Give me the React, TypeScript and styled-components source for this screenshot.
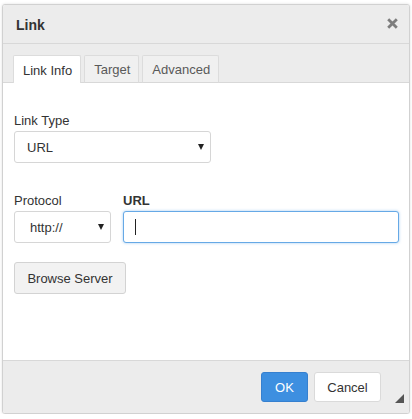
import React from "react";
import styled, { createGlobalStyle } from "styled-components";

const Global = createGlobalStyle`
  html, body { margin: 0; padding: 0; background: #ffffff; }
  body { font-family: "Liberation Sans", Arial, sans-serif; font-size: 13px; color: #333; }
  * { box-sizing: border-box; }
`;

const Dialog = styled.div`
  margin: 4px 0 0 2px;
  width: 408px;
  border: 1px solid #d1d1d1;
  border-radius: 3px;
  box-shadow: 0 0 3px rgba(0, 0, 0, 0.12);
  overflow: hidden;
  display: flex;
  flex-direction: column;
  background: #fff;
`;

const TitleBar = styled.div`
  height: 39px;
  background: #ececec;
  border-bottom: 1px solid #d8d8d8;
  display: flex;
  align-items: center;
  justify-content: space-between;
  padding: 0 11px 0 13px;
`;

const Title = styled.div`
  font-weight: bold;
  font-size: 14px;
  color: #333;
  line-height: 16px;
  padding-top: 1px;
`;

const Close = styled.div`
  width: 11px;
  height: 11px;
  display: flex;
  margin-top: -1px;
`;

const TabStrip = styled.div`
  height: 39px;
  background: #ececec;
  border-bottom: 1px solid #d8d8d8;
  padding: 11px 0 0 10px;
  display: flex;
  align-items: flex-start;
`;

const Tab = styled.div<{ $active?: boolean }>`
  height: 28px;
  margin-bottom: -1px;
  margin-right: 3px;
  padding: 0 8px 0 9px;
  border: 1px solid #dcdcdc;
  border-bottom: ${(p) => (p.$active ? "none" : "1px solid #d8d8d8")};
  background: ${(p) => (p.$active ? "#ffffff" : "#f0f0f0")};
  color: ${(p) => (p.$active ? "#333" : "#595959")};
  display: flex;
  align-items: center;
  font-size: 13px;
  border-radius: 2px 2px 0 0;
  padding-top: ${(p) => (p.$active ? "1px" : "0")};
`;

const Content = styled.div`
  height: 277px;
  background: #fff;
  padding: 30px 11px 0 11px;
  display: flex;
  flex-direction: column;
`;

const Label = styled.div<{ $bold?: boolean }>`
  font-size: 13px;
  line-height: 16px;
  height: 16px;
  margin-bottom: 2px;
  color: #333;
  font-weight: ${(p) => (p.$bold ? "bold" : "normal")};
`;

const SelectBox = styled.div<{ $width: number; $pad: number }>`
  width: ${(p) => p.$width}px;
  height: 32px;
  border: 1px solid #d6d6d6;
  border-radius: 3px;
  background: #fff;
  display: flex;
  align-items: center;
  justify-content: space-between;
  padding: 0 6px 0 ${(p) => p.$pad}px;
  font-size: 13px;
  color: #333;
`;

const Arrow = () => (
  <svg width="6" height="6" viewBox="0 0 6 6">
    <path d="M0 0 L6 0 L3 6 Z" fill="#222" />
  </svg>
);

const Row = styled.div`
  display: flex;
  gap: 12px;
  margin-top: 30px;
`;

const Field = styled.div<{ $grow?: boolean }>`
  display: flex;
  flex-direction: column;
  flex: ${(p) => (p.$grow ? 1 : "none")};
`;

const TextInput = styled.div`
  width: 276px;
  height: 32px;
  border: 1px solid #66a9e6;
  border-radius: 3px;
  box-shadow: 0 0 3px rgba(102, 169, 230, 0.6);
  background: #fff;
  display: flex;
  align-items: center;
  padding-left: 11px;
`;

const Caret = styled.span`
  width: 1px;
  height: 16px;
  background: #222;
`;

const Button = styled.div`
  margin-top: 19px;
  width: 112px;
  height: 32px;
  border: 1px solid #d3d3d3;
  border-radius: 3px;
  background: #f2f2f2;
  display: flex;
  align-items: center;
  justify-content: center;
  font-size: 13px;
  color: #333;
`;

const Footer = styled.div`
  height: 53px;
  border-top: 1px solid #d8d8d8;
  background: #ececec;
  display: flex;
  justify-content: flex-end;
  align-items: flex-start;
  padding: 11px 28px 0 0;
  gap: 6px;
  position: relative;
`;

const FooterButton = styled.div<{ $primary?: boolean; $width: number }>`
  width: ${(p) => p.$width}px;
  height: 30px;
  border-radius: 3px;
  border: 1px solid ${(p) => (p.$primary ? "#3680cf" : "#dadada")};
  background: ${(p) => (p.$primary ? "#3d8fe0" : "#ffffff")};
  color: ${(p) => (p.$primary ? "#ffffff" : "#333")};
  display: flex;
  align-items: center;
  justify-content: center;
  font-size: 13px;
`;

const Grip = styled.div`
  position: absolute;
  right: 5px;
  bottom: 10px;
  width: 9px;
  height: 9px;
  display: flex;
`;

export default function App() {
  return (
    <>
      <Global />
      <Dialog>
        <TitleBar>
          <Title>Link</Title>
          <Close>
            <svg width="11" height="11" viewBox="0 0 11 11">
              <path d="M1.2 1.2 L9.8 9.8 M9.8 1.2 L1.2 9.8" stroke="#7d7d7d" strokeWidth="2.8" strokeLinecap="butt" />
            </svg>
          </Close>
        </TitleBar>
        <TabStrip>
          <Tab $active>Link Info</Tab>
          <Tab>Target</Tab>
          <Tab>Advanced</Tab>
        </TabStrip>
        <Content>
          <Label>Link Type</Label>
          <SelectBox $width={197} $pad={12}>
            <span>URL</span>
            <Arrow />
          </SelectBox>
          <Row>
            <Field>
              <Label>Protocol</Label>
              <SelectBox $width={97} $pad={15}>
                <span>http://</span>
                <Arrow />
              </SelectBox>
            </Field>
            <Field $grow>
              <Label $bold>URL</Label>
              <TextInput>
                <Caret />
              </TextInput>
            </Field>
          </Row>
          <Button>Browse Server</Button>
        </Content>
        <Footer>
          <FooterButton $primary $width={47}>OK</FooterButton>
          <FooterButton $width={67}>Cancel</FooterButton>
          <Grip>
            <svg width="9" height="9" viewBox="0 0 9 9">
              <path d="M9 0 L9 9 L0 9 Z" fill="#555" />
            </svg>
          </Grip>
        </Footer>
      </Dialog>
    </>
  );
}
